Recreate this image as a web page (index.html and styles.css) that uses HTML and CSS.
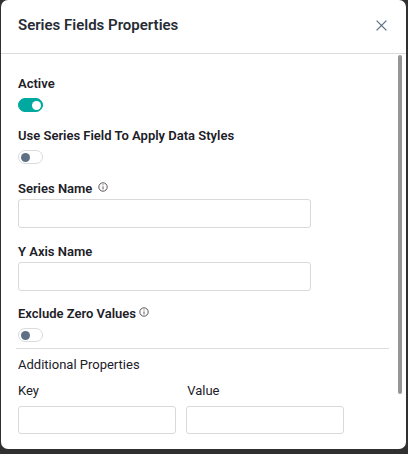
FILE: index.html
```html
<!DOCTYPE html>
<html lang="en">
<head>
<meta charset="utf-8">
<meta name="viewport" content="width=device-width, initial-scale=1">
<title>Series Fields Properties</title>
<link rel="stylesheet" href="styles.css">
</head>
<body>
<main class="dialog" role="dialog" aria-labelledby="dialog-title">
  <header class="dialog-header">
    <h1 class="dialog-title" id="dialog-title">Series Fields Properties</h1>
    <button class="close" type="button" aria-label="Close">
      <svg width="11" height="11" viewBox="0 0 11 11" aria-hidden="true"><path d="M.6.6l9.8 9.8M10.4.6L.6 10.4"/></svg>
    </button>
  </header>
  <form class="dialog-body">
    <div class="field">
      <label class="label" for="active">Active</label>
      <input class="switch" type="checkbox" id="active" checked>
    </div>
    <div class="field">
      <label class="label" for="use-series">Use Series Field To Apply Data Styles</label>
      <input class="switch" type="checkbox" id="use-series">
    </div>
    <div class="field field-text">
      <label class="label" for="series-name">Series Name
        <svg class="info info-spaced" width="10" height="10" viewBox="0 0 10 10" aria-hidden="true"><circle cx="5" cy="5" r="4.2"/><path d="M5 4.4v3M5 2.4v1"/></svg>
      </label>
      <input class="text-input" type="text" id="series-name">
    </div>
    <div class="field field-text">
      <label class="label" for="y-axis-name">Y Axis Name</label>
      <input class="text-input" type="text" id="y-axis-name">
    </div>
    <div class="field">
      <label class="label" for="exclude-zero">Exclude Zero Values
        <svg class="info" width="10" height="10" viewBox="0 0 10 10" aria-hidden="true"><circle cx="5" cy="5" r="4.2"/><path d="M5 4.4v3M5 2.4v1"/></svg>
      </label>
      <input class="switch" type="checkbox" id="exclude-zero">
    </div>
    <section class="additional">
      <h2 class="additional-title">Additional Properties</h2>
      <div class="pairs">
        <div class="pair">
          <label class="pair-label" for="key">Key</label>
          <input class="text-input" type="text" id="key">
        </div>
        <div class="pair">
          <label class="pair-label pair-label-value" for="value">Value</label>
          <input class="text-input" type="text" id="value">
        </div>
      </div>
    </section>
    <div class="scroll-thumb"></div>
  </form>
</main>
</body>
</html>
```

FILE: styles.css
```css
* {
  box-sizing: border-box;
}

body {
  margin: 0;
  min-height: 100vh;
  display: flex;
  padding: 0 2px 5px 1px;
  background: #303030;
  color: #1c2027;
  font-family: Roboto, "Liberation Sans", sans-serif;
  font-size: 13px;
  line-height: 20px;
}

.dialog {
  flex: 1;
  min-width: 0;
  display: flex;
  flex-direction: column;
  background: #fff;
  border-radius: 7px;
}

.dialog-header {
  display: flex;
  align-items: center;
  justify-content: space-between;
  padding: 15px 15px 18px 17px;
  border-bottom: 1px solid #dadcde;
}

.dialog-title {
  margin: 0;
  font-size: 15px;
  font-weight: 600;
  line-height: 20px;
  color: #272c35;
}

.close {
  display: flex;
  padding: 4px;
  border: 0;
  background: none;
  cursor: pointer;
}

.close svg {
  fill: none;
  stroke: #5f7085;
  stroke-width: 1.3;
}

.dialog-body {
  position: relative;
  flex: 1;
  display: flex;
  flex-direction: column;
  padding: 20px 17px 15px;
}

.field {
  display: flex;
  flex-direction: column;
  align-items: flex-start;
  margin-bottom: 14px;
}

.field-text {
  margin: 1px 0 13px;
}

.label {
  display: flex;
  align-items: flex-start;
  gap: 3px;
  font-weight: 600;
}

.info {
  margin-top: 3px;
  fill: none;
  stroke: #5c5558;
  stroke-width: 1;
}

.info-spaced {
  margin-left: 3px;
}

.switch {
  appearance: none;
  display: flex;
  align-items: center;
  width: 25px;
  height: 14px;
  margin: 4px 0 0;
  padding: 0 2px;
  border: 1px solid #d9dcdf;
  border-radius: 7px;
  background: #fff;
}

.switch::before {
  content: "";
  width: 9px;
  height: 9px;
  border-radius: 50%;
  background: #5f7085;
}

.switch:checked {
  justify-content: flex-end;
  padding: 0 1px;
  border-color: #00a9a0;
  background: #00a9a0;
}

.switch:checked::before {
  background: #fff;
}

.text-input {
  width: 100%;
  height: 29px;
  padding: 0 8px;
  border: 1px solid #d9d9d9;
  border-radius: 3px;
  background: #fff;
  font: inherit;
  color: inherit;
}

.field .text-input {
  width: 79%;
}

.additional {
  margin: -8px 0 0 -2px;
  padding: 6px 0 0 2px;
  border-top: 1px solid #dadcde;
}

.additional-title {
  margin: 0 0 6px;
  font-size: 13px;
  font-weight: 400;
}

.pairs {
  display: grid;
  grid-template-columns: 1fr 1fr;
  gap: 10px;
  width: 88%;
}

.pair {
  display: flex;
  flex-direction: column;
  gap: 5px;
}

.pair-label {
  font-weight: 400;
}

.pair-label-value {
  padding-left: 1px;
}

.pair .text-input {
  height: 28px;
}

.scroll-thumb {
  position: absolute;
  top: 1px;
  right: 4px;
  bottom: 55px;
  width: 4px;
  border-radius: 2px;
  background: #959595;
}
```
